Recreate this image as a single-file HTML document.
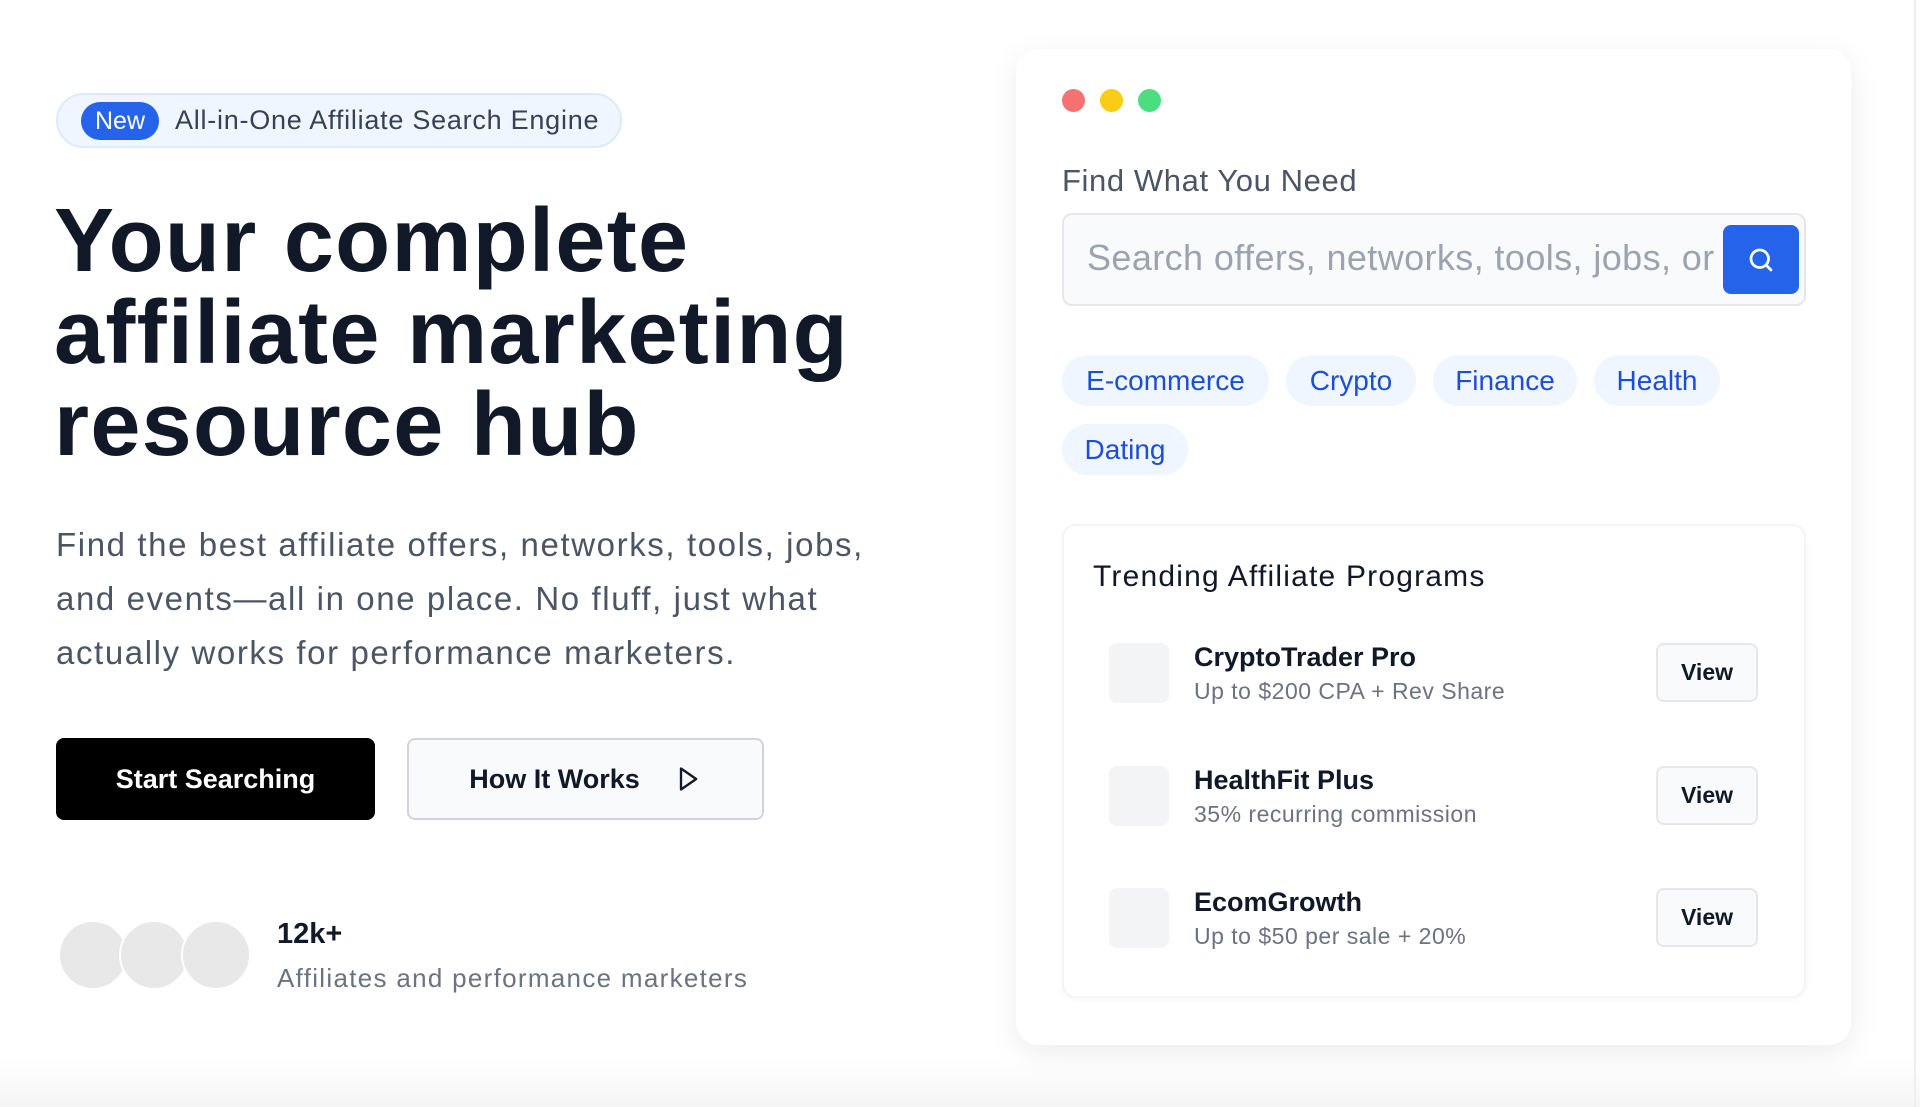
<!DOCTYPE html>
<html><head><meta charset="utf-8"><style>
*{box-sizing:border-box;margin:0;padding:0}
body{width:1920px;height:1107px;overflow:hidden;background:linear-gradient(#fff 0,#fff 1060px,#f5f5f5 1107px);font-family:"Liberation Sans",sans-serif;position:relative}
.a{position:absolute}
.badge{left:56px;top:93px;width:566px;height:55px;border:2px solid #dbeafe;background:#eff6ff;border-radius:28px}
.new{left:23px;top:7px;width:78px;height:38px;background:#2563eb;color:#fff;border-radius:19px;font-size:25px;line-height:38px;text-align:center}
.btxt{left:117px;top:0;line-height:51px;font-size:27px;color:#374151;letter-spacing:.75px}
h1{position:absolute;left:54px;top:195px;font-size:90px;line-height:92px;font-weight:700;color:#111827;letter-spacing:1.3px;white-space:nowrap}
.p{left:56px;top:518px;font-size:33px;line-height:54px;color:#4b5563;width:1000px;letter-spacing:1.6px}
.btn{top:738px;height:82px;border-radius:8px;font-size:27px;font-weight:700;display:flex;align-items:center;justify-content:center}
.av{width:70px;height:70px;border-radius:50%;background:#e8e8e8;border:2px solid #fff;top:920px}
.card{left:1016px;top:49px;width:835px;height:996px;background:#fff;border-radius:22px;box-shadow:0 8px 30px rgba(0,0,0,.08)}
.dot{width:23px;height:23px;border-radius:50%;top:89px}
.chip{height:51px;line-height:51px;border-radius:26px;background:#eff6ff;color:#1d4ed8;font-size:28px;text-align:center}
.row .ic{width:60px;height:60px;border-radius:8px;background:#f3f4f6}
.nm{font-size:27px;font-weight:700;color:#111827}
.sb{font-size:23px;color:#6b7280;letter-spacing:.5px}
.view{width:102px;height:59px;border:2px solid #e5e7eb;background:#f9fafb;border-radius:8px;font-size:23px;font-weight:700;color:#111827;line-height:55px;text-align:center}
</style></head><body>
<div class="a badge"><div class="a new">New</div><div class="a btxt">All-in-One Affiliate Search Engine</div></div>
<h1>Your complete<br>affiliate marketing<br>resource hub</h1>
<div class="a p">Find the best affiliate offers, networks, tools, jobs,<br>and events—all in one place. No fluff, just what<br>actually works for performance marketers.</div>
<div class="a btn" style="left:56px;width:319px;background:#000;color:#fff">Start Searching</div>
<div class="a btn" style="left:407px;width:357px;background:#f9fafb;border:2px solid #d1d5db;color:#111827">How It Works<svg width="28" height="28" viewBox="0 0 24 24" style="margin-left:34px" fill="none" stroke="#111827" stroke-width="2" stroke-linejoin="round"><path d="M6 3l13 9-13 9z"/></svg></div>
<div class="a av" style="left:58px"></div><div class="a av" style="left:119px"></div><div class="a av" style="left:181px"></div>
<div class="a" style="left:277px;top:918px;font-size:29px;font-weight:700;color:#111827">12k+</div>
<div class="a" style="left:277px;top:963px;font-size:26px;color:#6b7280;letter-spacing:1.3px">Affiliates and performance marketers</div>
<div class="a" style="left:1914px;top:0;width:2px;height:1107px;background:#eee"></div>
<div class="a card"></div>
<div class="a dot" style="left:1062px;background:#f87171"></div>
<div class="a dot" style="left:1100px;background:#facc15"></div>
<div class="a dot" style="left:1138px;background:#4ade80"></div>
<div class="a" style="left:1062px;top:163px;font-size:31px;color:#4b5563;letter-spacing:.6px">Find What You Need</div>
<div class="a" style="left:1062px;top:213px;width:744px;height:93px;border:2px solid #e5e7eb;background:#f9fafb;border-radius:10px"></div>
<div class="a" style="left:1087px;top:237px;font-size:36px;color:#9ca3af;white-space:nowrap;width:632px;overflow:hidden;letter-spacing:.4px">Search offers, networks, tools, jobs, or</div>
<div class="a" style="left:1723px;top:225px;width:76px;height:69px;background:#2563eb;border-radius:8px;display:flex;align-items:center;justify-content:center"><svg width="30" height="30" viewBox="0 0 24 24" fill="none" stroke="#fff" stroke-width="2.2" stroke-linecap="round"><circle cx="11" cy="11" r="7"/><path d="M16 16l4 4"/></svg></div>
<div class="a chip" style="left:1062px;top:355px;width:207px">E-commerce</div>
<div class="a chip" style="left:1286px;top:355px;width:130px">Crypto</div>
<div class="a chip" style="left:1433px;top:355px;width:144px">Finance</div>
<div class="a chip" style="left:1594px;top:355px;width:126px">Health</div>
<div class="a chip" style="left:1062px;top:424px;width:126px">Dating</div>
<div class="a" style="left:1062px;top:524px;width:744px;height:474px;border:2px solid #f3f4f6;border-radius:14px;box-shadow:0 2px 6px rgba(0,0,0,.03)"></div>
<div class="a" style="left:1093px;top:560px;font-size:30px;color:#111827;letter-spacing:1.2px">Trending Affiliate Programs</div>
<div class="a row" style="left:1109px;top:643px"><div class="ic"></div></div>
<div class="a nm" style="left:1194px;top:642px">CryptoTrader Pro</div>
<div class="a sb" style="left:1194px;top:678px">Up to $200 CPA + Rev Share</div>
<div class="a view" style="left:1656px;top:643px">View</div>
<div class="a row" style="left:1109px;top:766px"><div class="ic"></div></div>
<div class="a nm" style="left:1194px;top:765px">HealthFit Plus</div>
<div class="a sb" style="left:1194px;top:801px">35% recurring commission</div>
<div class="a view" style="left:1656px;top:766px">View</div>
<div class="a row" style="left:1109px;top:888px"><div class="ic"></div></div>
<div class="a nm" style="left:1194px;top:887px">EcomGrowth</div>
<div class="a sb" style="left:1194px;top:923px">Up to $50 per sale + 20%</div>
<div class="a view" style="left:1656px;top:888px">View</div>
</body></html>
